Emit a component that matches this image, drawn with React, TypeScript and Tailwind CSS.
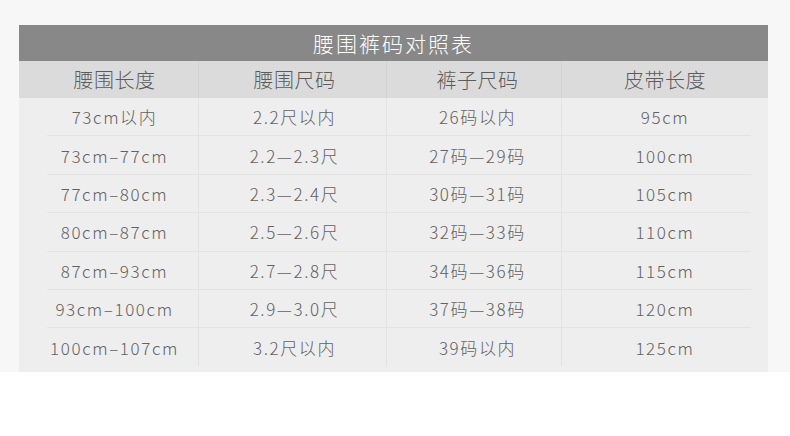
import React from "react";

const rows: string[][] = [
  ["73cm以内", "2.2尺以内", "26码以内", "95cm"],
  ["73cm–77cm", "2.2—2.3尺", "27码—29码", "100cm"],
  ["77cm–80cm", "2.3—2.4尺", "30码—31码", "105cm"],
  ["80cm–87cm", "2.5—2.6尺", "32码—33码", "110cm"],
  ["87cm–93cm", "2.7—2.8尺", "34码—36码", "115cm"],
  ["93cm–100cm", "2.9—3.0尺", "37码—38码", "120cm"],
  ["100cm–107cm", "3.2尺以内", "39码以内", "125cm"],
];

const headers = ["腰围长度", "腰围尺码", "裤子尺码", "皮带长度"];

const font = { fontFamily: '"Noto Sans CJK SC", "Noto Sans", sans-serif' };

export default function App() {
  return (
    <div className="w-[790px] h-[436px] bg-white" style={font}>
      <div className="h-[372px] bg-[#f7f7f7] pt-[25px] pl-[19px]">
        <div className="w-[749px]">
          <div className="h-[36px] bg-[#888888] flex items-center justify-center text-white text-[21px] font-light tracking-[2px] leading-none">
            腰围裤码对照表
          </div>
          <div className="h-[37px] bg-[#dbdbdb] grid grid-cols-[180px_188px_175px_206px] text-[#5c5c5c] text-[20px] font-light tracking-[0.5px] leading-none">
            {headers.map((h, i) => (
              <div
                key={h}
                className={
                  "flex items-center justify-center " +
                  (i < 3 ? "border-r border-[#d3d3d3] " : "") +
                  (i === 0 ? "pl-[12px]" : i === 1 ? "pl-[4px]" : i === 2 ? "pl-[7px]" : "")
                }
              >
                {h}
              </div>
            ))}
          </div>
          <div className="h-[274px] bg-[#eeeeee] flex flex-col text-[#626262] text-[17px] font-light tracking-[1.6px] leading-none">
            {rows.map((r, ri) => (
              <React.Fragment key={ri}>
                {ri > 0 && <div className="h-px ml-[28px] mr-[17px] bg-[#e3e3e3]" />}
                <div className="h-[37.4px] grid grid-cols-[180px_188px_175px_206px]">
                  {r.map((c, i) => (
                    <div
                      key={i}
                      className={
                        "flex items-center justify-center whitespace-nowrap " +
                        (i < 3 ? "border-r border-[#e3e3e3] " : "") +
                        (i === 0 ? "pl-[12px]" : i === 1 ? "pl-[4px]" : i === 2 ? "pl-[7px]" : "")
                      }
                    >
                      {c}
                    </div>
                  ))}
                </div>
              </React.Fragment>
            ))}
          </div>
        </div>
      </div>
    </div>
  );
}
